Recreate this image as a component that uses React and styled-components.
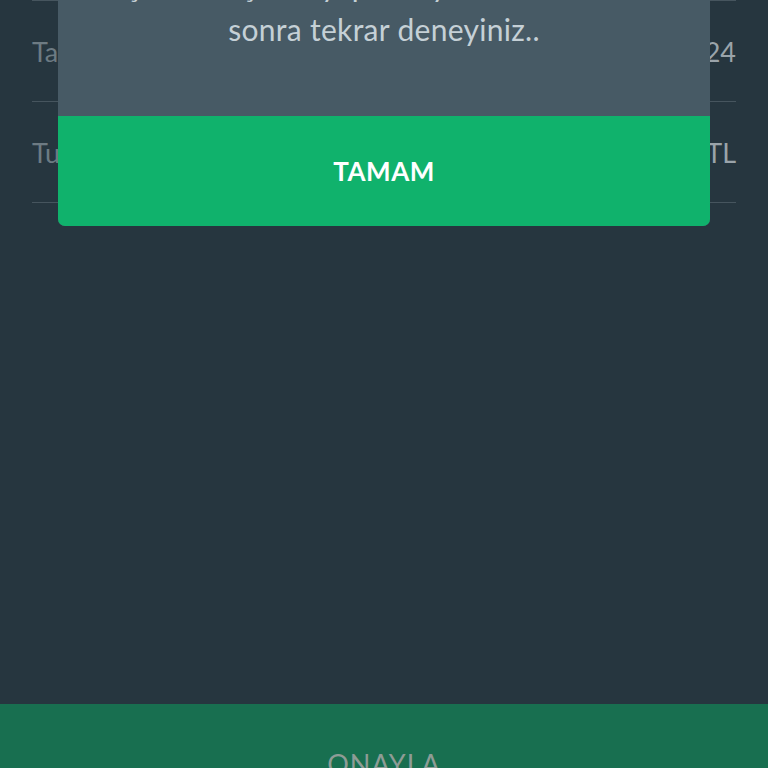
import styled, { createGlobalStyle } from "styled-components";

const GlobalStyle = createGlobalStyle`
  html, body {
    margin: 0;
    padding: 0;
    background: #26363f;
  }
  body {
    font-family: Lato, "Noto Sans", sans-serif;
  }
`;

const Page = styled.div`
  position: relative;
  width: 768px;
  height: 768px;
  overflow: hidden;
  background: #26363f;
  display: flex;
  flex-direction: column;
`;

const List = styled.div`
  flex: 1;
  padding: 0 32px;
  display: flex;
  flex-direction: column;
`;

const Row = styled.div`
  height: 100px;
  border-top: 1px solid #46555e;
  display: flex;
  align-items: center;
  justify-content: space-between;
  font-size: 27px;
  &:last-child {
    border-bottom: 1px solid #46555e;
  }
`;

const Label = styled.span`
  color: #6d7b83;
`;

const Value = styled.span`
  color: #9aa4aa;
`;

const BottomBar = styled.div`
  height: 64px;
  flex-shrink: 0;
  background: #186f50;
  display: flex;
  justify-content: center;
  padding-top: 44px;
  box-sizing: border-box;
`;

const BarText = styled.span`
  color: #8e9c96;
  font-size: 27px;
  letter-spacing: 1px;
  line-height: 32px;
`;

const Dialog = styled.div`
  position: absolute;
  left: 58px;
  width: 652px;
  bottom: 542px;
  border-radius: 7px;
  overflow: hidden;
  background: #475a65;
`;

const Message = styled.p`
  margin: 0;
  padding: 40px 20px 65px;
  text-align: center;
  color: #c5d0d6;
  font-size: 30px;
  line-height: 44px;
  letter-spacing: 0.3px;
`;

const OkButton = styled.div`
  height: 110px;
  background: #10b26c;
  color: #ffffff;
  font-weight: 700;
  font-size: 26px;
  letter-spacing: 0.5px;
  display: flex;
  align-items: center;
  justify-content: center;
`;

export default function App() {
  return (
    <>
      <GlobalStyle />
      <Page>
        <List>
          <Row>
            <Label>Tarih</Label>
            <Value>12.03.2024</Value>
          </Row>
          <Row>
            <Label>Tutar</Label>
            <Value>150,00 TL</Value>
          </Row>
        </List>
        <BottomBar>
          <BarText>ONAYLA</BarText>
        </BottomBar>
        <Dialog>
          <Message>
            İşleminiz şu an yapılamıyor. Lütfen daha
            <br />
            sonra tekrar deneyiniz..
          </Message>
          <OkButton>TAMAM</OkButton>
        </Dialog>
      </Page>
    </>
  );
}
